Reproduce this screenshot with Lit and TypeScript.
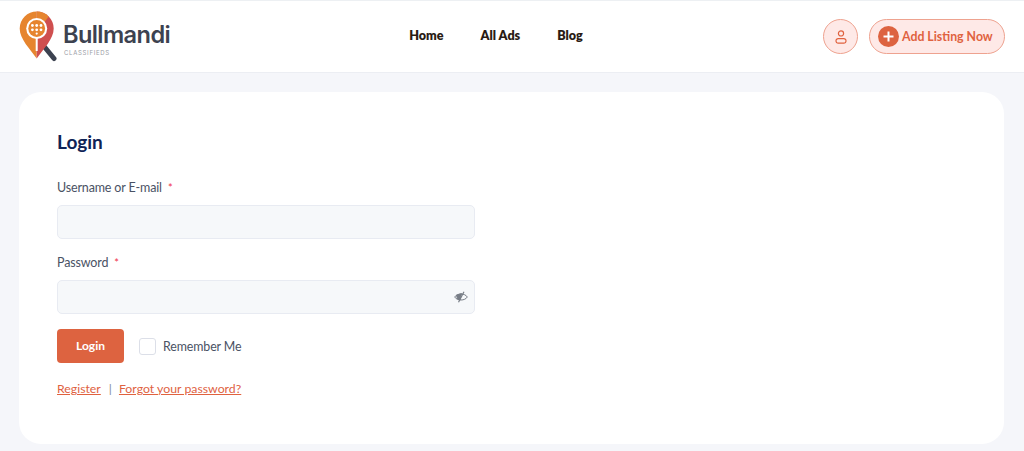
import { LitElement, html, css } from "lit";
import { customElement } from "lit/decorators.js";

@customElement("app-root")
export class AppRoot extends LitElement {
  static styles = css`
    :host { display: block; height: 451px; overflow: hidden; background: #f5f6fa; font-family: "Lato", "Liberation Sans", sans-serif; color: #3f4756; }
    * { box-sizing: border-box; }
    header { height: 73px; background: #fff; border-top: 1px solid #edf0f3; border-bottom: 1px solid #eceef3; display: grid; grid-template-columns: 1fr auto 1fr; align-items: center; padding: 0 19px; }
    .logo { display: flex; align-items: flex-start; height: 62px; padding-top: 2px; }
    .logo svg { width: 44px; height: 54px; flex: none; }
    .brand { display: flex; flex-direction: column; margin-top: 13px; }
    .brand b { font: 600 23.6px/28px "Inter", sans-serif; color: #3d4250; letter-spacing: -0.6px; }
    .brand small { font: 400 6px/8px "Inter", sans-serif; color: #9a9da5; letter-spacing: 0.7px; margin: 0 0 0 1px; }
    nav { display: flex; gap: 37px; font: 800 12.6px/18px "Lato", sans-serif; color: #2a1c14; margin: 0 32px 1px 0; }
    nav a { color: inherit; text-decoration: none; }
    .actions { display: flex; justify-content: flex-end; align-items: center; gap: 11px; }
    .user { width: 35px; height: 35px; border-radius: 50%; background: #fee9e7; border: 1px solid #eea28f; display: flex; align-items: center; justify-content: center; }
    .add { height: 35px; width: 136px; border-radius: 18px; background: #fee9e7; border: 1px solid #eea28f; display: flex; align-items: center; gap: 3px; padding-left: 8px; font: 700 12.3px/18px "Lato", sans-serif; color: #e0623f; white-space: nowrap; }
    .plus { width: 21px; height: 21px; border-radius: 50%; background: #dd6340; display: flex; align-items: center; justify-content: center; flex: none; }
    main { padding: 19px 20px 0 19px; }
    .card { height: 352px; background: #fff; border-radius: 22px; padding: 38px 38px 0; }
    h1 { margin: 0; font: 700 19px/24px "Lato", sans-serif; color: #0f2356; }
    form { width: 418px; margin-top: 25px; }
    label { display: block; height: 18px; font: 400 12.5px/18px "Lato", sans-serif; letter-spacing: -0.15px; color: #4a5264; margin-bottom: 8px; }
    label i { font-style: normal; color: #f0304a; margin-left: 3px; font-size: 11px; }
    .input { height: 34px; background: #f6f8fa; border: 1px solid #e8ebf2; border-radius: 5px; margin-bottom: 15px; display: flex; align-items: center; justify-content: flex-end; padding-right: 6px; }
    .input.last { margin-bottom: 0; }
    .row { display: flex; align-items: center; margin: 15px 0 17px; }
    .btn { width: 67px; height: 34px; border-radius: 4px; background: #dd6340; color: #fff; border: 0; font: 700 12px/18px "Lato", sans-serif; padding: 0; }
    .check { width: 17px; height: 17px; margin: 0 7px 0 15px; border: 1px solid #dcdfe8; border-radius: 3px; background: #fff; }
    .remember { font: 400 12.4px/18px "Lato", sans-serif; letter-spacing: -0.1px; color: #4a5264; padding-top: 2px; }
    .links { display: flex; align-items: center; font: 400 12.3px/18px "Lato", sans-serif; color: #848b98; }
    .links a { color: #e0623f; text-decoration: underline; }
    .links span { margin: 0 7px 0 8px; }
  `;

  render() {
    return html`
      <header>
        <div class="logo">
          <svg viewBox="0 0 44 54" aria-hidden="true">
            <path d="M26 39.5 L35 50.5" stroke="#3c4250" stroke-width="5" stroke-linecap="round" fill="none"/>
            <path d="M17.7 3.5 A17 17 0 0 0 .7 20.5 C.7 31 11 41 17.7 50.5 Z" fill="#e6852f"/>
            <path d="M17.7 3.5 A17 17 0 0 1 34.7 20.5 C34.7 31 24.4 41 17.7 50.5 Z" fill="#cf4f4f"/>
            <path d="M17.7 3.5 A17 17 0 0 1 29.7 8.5 L24 16 L17.7 16 Z" fill="#e6852f"/>
            <circle cx="17.7" cy="20.5" r="10.5" fill="#fff"/>
            <rect x="16.7" y="30" width="2" height="13" fill="#fff"/>
            <circle cx="17.7" cy="20.5" r="8.4" fill="#e6852f"/>
            <g fill="#fff"><circle cx="13.4" cy="17.5" r="1.4"/><circle cx="17.7" cy="17.5" r="1.4"/><circle cx="22" cy="17.5" r="1.4"/><circle cx="13.4" cy="21.8" r="1.4"/><circle cx="17.7" cy="21.8" r="1.4"/><circle cx="22" cy="21.8" r="1.4"/><circle cx="17.7" cy="25.6" r="1.1"/></g>
          </svg>
          <div class="brand"><b>Bullmandi</b><small>CLASSIFIEDS</small></div>
        </div>
        <nav><a>Home</a><a>All Ads</a><a>Blog</a></nav>
        <div class="actions">
          <div class="user">
            <svg width="12" height="14" viewBox="0 0 12 14" fill="none" stroke="#e0623f" stroke-width="1.2"><circle cx="6" cy="3.4" r="2.6"/><path d="M3.4 8.6 H8.6 A2.2 2.2 0 0 1 11 11 A2.2 2.2 0 0 1 8.8 13.2 H3.2 A2.2 2.2 0 0 1 1 11 A2.2 2.2 0 0 1 3.4 8.6 Z"/></svg>
          </div>
          <div class="add">
            <span class="plus"><svg width="11" height="11" viewBox="0 0 11 11" stroke="#fff" stroke-width="2"><path d="M5.5 .5 V10.5 M.5 5.5 H10.5"/></svg></span>
            Add Listing Now
          </div>
        </div>
      </header>
      <main>
        <section class="card">
          <h1>Login</h1>
          <form>
            <label>Username or E-mail <i>*</i></label>
            <div class="input"></div>
            <label>Password <i>*</i></label>
            <div class="input last">
              <svg width="14" height="12" viewBox="0 0 14 12" fill="none" stroke="#777d86" stroke-width="1"><path d="M.7 6 C3 2 11 2 13.3 6 C11 10 3 10 .7 6 Z"/><path d="M7.5 2.6 L2.5 4.2 L3.5 8 L6 9 Z" fill="#777d86"/><path d="M10 .8 L4.5 11.2" stroke-width="1.2"/></svg>
            </div>
            <div class="row">
              <button class="btn" type="button">Login</button>
              <span class="check"></span>
              <span class="remember">Remember Me</span>
            </div>
            <div class="links"><a>Register</a><span>|</span><a>Forgot your password?</a></div>
          </form>
        </section>
      </main>
    `;
  }
}
